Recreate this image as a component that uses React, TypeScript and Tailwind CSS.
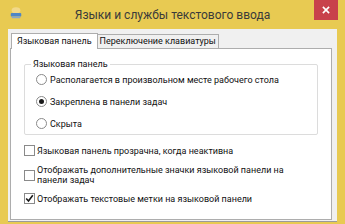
import React from "react";

function Radio({ checked, label }: { checked?: boolean; label: string }) {
  return (
    <div className="flex h-[13px] items-center gap-[3px] whitespace-nowrap">
      <span className="flex h-[11px] w-[11px] shrink-0 items-center justify-center rounded-full border border-[#8a8a8a] bg-white">
        {checked ? <span className="h-[5px] w-[5px] rounded-full bg-[#1a1a1a]" /> : null}
      </span>
      <span>{label}</span>
    </div>
  );
}

function Check({ checked, label }: { checked?: boolean; label: React.ReactNode }) {
  return (
    <div className="flex items-center gap-[2px] whitespace-nowrap">
      <span className="flex h-[11px] w-[11px] shrink-0 items-center justify-center border border-[#8a8a8a] bg-white">
        {checked ? (
          <svg width="9" height="9" viewBox="0 0 9 9">
            <path d="M1.2 4.5 L3.5 7 L7.8 1.3" fill="none" stroke="#1a1a1a" strokeWidth="1.6" />
          </svg>
        ) : null}
      </span>
      <span className="leading-[10px]">{label}</span>
    </div>
  );
}

export default function App() {
  return (
    <div
      className="h-[224px] w-[345px] overflow-hidden bg-[#e8ca52] text-[9px] leading-[12px] text-[#111]"
      style={{ fontFamily: 'Roboto, "Noto Sans", sans-serif' }}
    >
      <div className="relative flex h-[29px] items-center justify-center">
        <svg className="absolute left-[9px] top-[6px]" width="14" height="14" viewBox="0 0 16 16">
          <ellipse cx="8" cy="5" rx="5" ry="3.5" fill="#f2d98a" />
          <rect x="2" y="8" width="12" height="4" rx="1" fill="#4f86c6" />
          <rect x="3" y="12" width="10" height="2" rx="1" fill="#8aa7c8" />
        </svg>
        <span className="text-[12px] text-[#3a3a3a]">Языки и службы текстового ввода</span>
        <div className="absolute right-[7px] top-0 flex h-[20px] w-[24px] items-center justify-center bg-[#c8414b]">
          <svg width="8" height="8" viewBox="0 0 9 9">
            <path d="M1 1 L8 8 M8 1 L1 8" stroke="white" strokeWidth="1.8" />
          </svg>
        </div>
      </div>
      <div className="mx-[8px] h-[193px] border-b border-[#9a9a9a] bg-[#f0f0f0] pl-[2px] pr-[5px] pt-[4px]">
        <div className="flex items-end">
          <div className="relative z-10 -mb-px ml-[1px] border border-b-0 border-[#adadad] bg-white px-[5px] pb-[2px] pt-[1px]">
            Языковая панель
          </div>
          <div className="border border-b-0 border-l-0 border-[#adadad] bg-[#f0f0f0] px-[2px] pb-[1px]">
            Переключение клавиатуры
          </div>
        </div>
        <div className="h-[172px] border border-[#adadad] bg-white pl-[13px] pr-[13px] pt-[15px]">
          <div className="relative rounded-[2px] border border-[#dcdcdc] pb-[4px] pl-[11px] pt-[8px]">
            <span className="absolute left-[6px] top-[-7px] bg-white px-[2px]">Языковая панель</span>
            <div className="flex flex-col gap-[9px]">
              <Radio label="Располагается в произвольном месте рабочего стола" />
              <Radio checked label="Закреплена в панели задач" />
              <Radio label="Скрыта" />
            </div>
          </div>
          <div className="mt-[10px] flex flex-col">
            <Check label="Языковая панель прозрачна, когда неактивна" />
            <div className="mt-[9px]">
              <Check
                label={
                  <>
                    Отображать дополнительные значки языковой панели на
                    <br />
                    панели задач
                  </>
                }
              />
            </div>
            <div className="mt-[8px]">
              <Check checked label="Отображать текстовые метки на языковой панели" />
            </div>
          </div>
        </div>
      </div>
    </div>
  );
}
